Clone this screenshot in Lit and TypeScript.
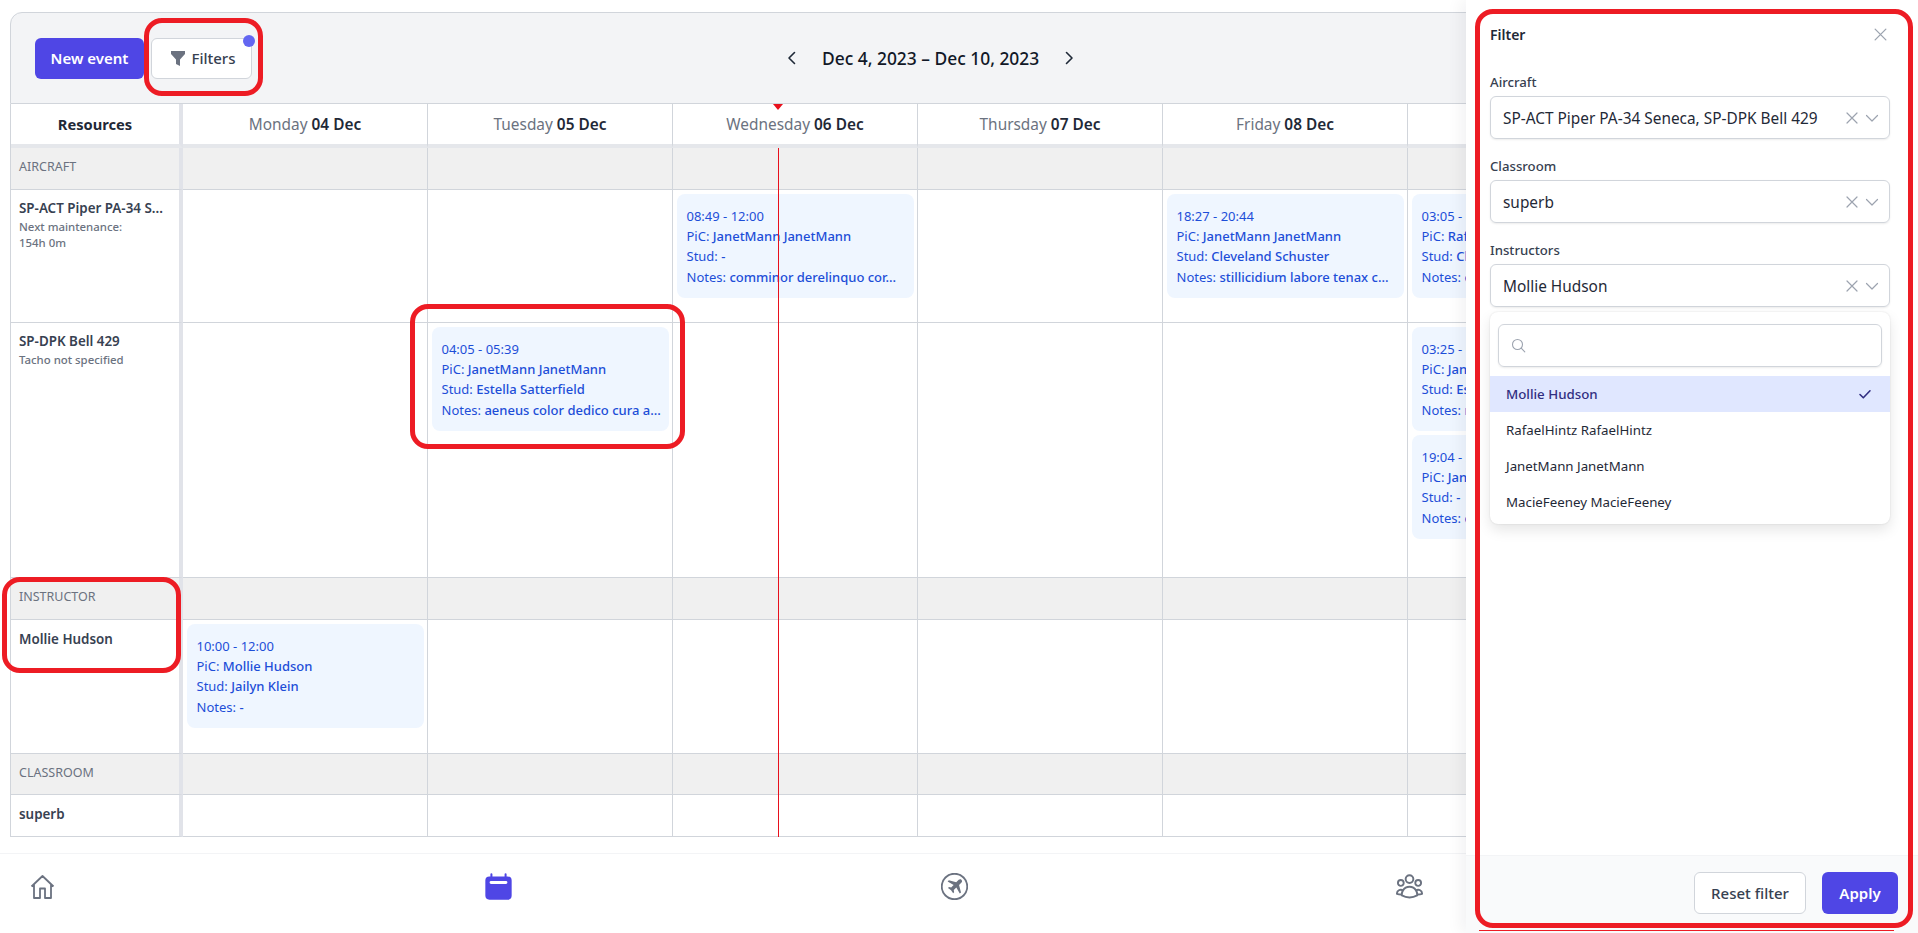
import { LitElement, html, css, svg } from "lit";
import { customElement } from "lit/decorators.js";

type Ev = { time: string; pic: string; stud: string; notes: string };
type Row =
  | { kind: "group"; label: string; h: number }
  | { kind: "res"; name: string; sub?: string[]; h: number; days: Record<number, Ev[]> };

const J = "JanetMann JanetMann";
const ROWS: Row[] = [
  { kind: "group", label: "AIRCRAFT", h: 42 },
  {
    kind: "res", name: "SP-ACT Piper PA-34 S...", sub: ["Next maintenance:", "154h 0m"], h: 133,
    days: {
      2: [{ time: "08:49 - 12:00", pic: J, stud: "-", notes: "comminor derelinquo cor..." }],
      4: [{ time: "18:27 - 20:44", pic: J, stud: "Cleveland Schuster", notes: "stillicidium labore tenax c..." }],
      5: [{ time: "03:05 - 06:12", pic: "RafaelHintz RafaelHintz", stud: "Cleveland Schuster", notes: "cupio vero" }],
    },
  },
  {
    kind: "res", name: "SP-DPK Bell 429", sub: ["Tacho not specified"], h: 255,
    days: {
      1: [{ time: "04:05 - 05:39", pic: J, stud: "Estella Satterfield", notes: "aeneus color dedico cura a..." }],
      5: [
        { time: "03:25 - 04:40", pic: J, stud: "Estella Satterfield", notes: "rerum vero" },
        { time: "19:04 - 20:30", pic: J, stud: "-", notes: "cupio vero" },
      ],
    },
  },
  { kind: "group", label: "INSTRUCTOR", h: 42 },
  {
    kind: "res", name: "Mollie Hudson", h: 134,
    days: { 0: [{ time: "10:00 - 12:00", pic: "Mollie Hudson", stud: "Jailyn Klein", notes: "-" }] },
  },
  { kind: "group", label: "CLASSROOM", h: 41 },
  { kind: "res", name: "superb", h: 42, days: {} },
];
const DAYS: [string, string][] = [
  ["Monday", "04 Dec"], ["Tuesday", "05 Dec"], ["Wednesday", "06 Dec"], ["Thursday", "07 Dec"],
  ["Friday", "08 Dec"], ["Saturday", "09 Dec"], ["Sunday", "10 Dec"],
];
const OPTIONS = ["Mollie Hudson", "RafaelHintz RafaelHintz", "JanetMann JanetMann", "MacieFeeney MacieFeeney"];
const MARKS = [
  { x: 144, y: 18, w: 119, h: 78 },
  { x: 410, y: 304, w: 275, h: 145 },
  { x: 2, y: 577, w: 179, h: 96 },
  { x: 1475, y: 9, w: 438, h: 919 },
];

const xIcon = (s: number) => svg`<svg width=${s} height=${s} viewBox="0 0 14 14" fill="none" stroke="currentColor" stroke-width="1.2" stroke-linecap="round"><path d="M2 2l10 10M12 2L2 12"/></svg>`;
const chev = svg`<svg width="14" height="14" viewBox="0 0 14 14" fill="none" stroke="currentColor" stroke-width="1.2" stroke-linecap="round" stroke-linejoin="round"><path d="M1.5 4.5L7 10l5.5-5.5"/></svg>`;

@customElement("app-root")
export class AppRoot extends LitElement {
  static styles = css`
    :host { display: block; position: relative; width: 1918px; height: 933px; overflow: hidden; background: #fff;
      font-family: "Noto Sans", "Open Sans", sans-serif; color: #374151; font-size: 14px; }
    .page { display: flex; flex-direction: column; height: 933px; padding-top: 12px; box-sizing: border-box; }
    .card { margin-left: 10px; width: 1888px; box-sizing: border-box; border-radius: 12px 12px 0 0; position: relative; height: 825px; }
    .bar { height: 92px; box-sizing: border-box; background: #f3f4f6; border: 1px solid #d1d5db;
      border-radius: 12px 12px 0 0; display: flex; align-items: center; padding: 0 0 0 24px; }
    .btn { height: 41px; box-sizing: border-box; border-radius: 6px; font-size: 15px; font-weight: 600; display: flex; align-items: center; justify-content: center; }
    .primary { background: #4f46e5; color: #fff; }
    .new { width: 109px; }
    .filters { position: relative; width: 101px; margin-left: 7px; padding-left: 10px; background: #fff; border: 1px solid #d1d5db; font-weight: 500; color: #374151; gap: 6px; }
    .dot { position: absolute; top: -4px; right: -4px; width: 12px; height: 12px; border-radius: 50%; background: #6366f1; }
    .range { margin-left: 535px; display: flex; align-items: center; gap: 25px; font-size: 17.4px; font-weight: 500; color: #111827; }
    .range svg { display: block; }
    .grid { display: grid; grid-template-columns: 172px repeat(7, 245px); border-left: 1px solid #d1d5db; box-sizing: border-box; position: relative; }
    .cell { box-sizing: border-box; border-right: 1px solid #d1d5db; border-bottom: 1px solid #d1d5db; min-width: 0; }
    .res { border-right: 4px solid #e1e3e9; }
    .hd { height: 44px; border-bottom: 4px solid #e5e7eb; display: flex; align-items: center; justify-content: center; color: #6b7280; font-size: 15.4px; gap: 4px; }
    .hd b { color: #1f2937; font-weight: 600; }
    .hd.res b { font-weight: 700; color: #1f2937; font-size: 14.7px; }
    .grp { background: #f0f0f0; }
    .grp.res { color: #6b7280; font-size: 12.5px; padding: 9px 0 0 8px; line-height: 20px; }
    .nm { padding: 8px 6px 0 8px; }
    .nm.solo { padding-top: 9px; }
    .nm .t { font-size: 13.4px; font-weight: 600; color: #374151; line-height: 20px; white-space: nowrap; }
    .nm .s { font-size: 11.4px; font-weight: 500; color: #6b7280; line-height: 16px; white-space: nowrap; }
    .nm .t + .s { margin-top: 1px; }
    .day { padding: 4px 3px 0 4px; display: flex; flex-direction: column; gap: 4px; }
    .ev { height: 104px; box-sizing: border-box; padding: 12px 10px 0 9.5px; border-radius: 8px; background: #eff6ff; color: #1d4ed8; font-size: 13px; line-height: 20.2px; }
    .ev div { white-space: nowrap; }
    .ev b { font-weight: 500; }
    .now { position: absolute; left: 768px; top: 136px; height: 689px; width: 1px; background: #e8101c; }
    .tri { position: absolute; left: 763px; top: 92px; width: 0; height: 0; border: 5px solid transparent; border-top: 6px solid #e8101c; border-bottom: 0; }
    .nav { margin-top: 16px; border-top: 1px solid #f3f4f6; height: 80px; box-sizing: border-box; display: flex; justify-content: space-between; padding: 19px 39px 0 29px; align-items: flex-start; color: #6b7280; }
    .nav svg { display: block; width: 27px; height: 27px; }
    .nav .on { color: #4f46e5; }
    .panel { position: absolute; left: 1466px; top: 0; width: 452px; height: 933px; background: #fff; box-shadow: -6px 0 14px rgba(17,24,39,.05);
      display: flex; flex-direction: column; }
    .ptop { height: 856px; box-sizing: border-box; padding: 24px 28px 0 24px; border-bottom: 1px solid #f3f4f6; }
    .phead { display: flex; justify-content: space-between; align-items: center; height: 20px; margin-bottom: 28px; }
    .phead span { font-size: 14px; font-weight: 600; color: #1f2937; }
    .phead i { display: flex; color: #9ca3af; margin-right: 2px; }
    .lab { font-size: 13.2px; font-weight: 500; color: #374151; line-height: 20px; height: 20px; margin: 0 0 4px; }
    .sel { height: 43px; box-sizing: border-box; border: 1px solid #d1d5db; border-radius: 6px; box-shadow: 0 1px 2px rgba(0,0,0,.08); display: flex; align-items: center; padding: 1px 10px 0 12px; font-size: 15.4px; color: #1f2937; margin-bottom: 17px; }
    .sel span { flex: 1; white-space: nowrap; }
    .sel i { display: flex; color: #9ca3af; }
    .sel i + i { margin-left: 6px; }
    .drop { margin-top: -12px; border-radius: 8px; background: #fff; box-shadow: 0 0 2px rgba(0,0,0,.12), 0 6px 14px rgba(0,0,0,.1); height: 212px; box-sizing: border-box; padding-top: 12px; overflow: hidden; }
    .search { height: 43px; margin: 0 8px 9px; box-sizing: border-box; border: 1px solid #d1d5db; border-radius: 6px; box-shadow: 0 1px 2px rgba(0,0,0,.08); display: flex; align-items: center; padding-left: 12px; color: #9ca3af; }
    .opt { height: 36px; display: flex; align-items: center; justify-content: space-between; padding: 0 18px 0 16px; font-size: 13.3px; color: #1f2937; }
    .opt.sel-o { background: #e0e7ff; color: #312e81; font-weight: 500; }
    .pfoot { flex: 1; background: #f9fafb; display: flex; justify-content: flex-end; gap: 16px; padding: 16px 20px 0 0; box-sizing: border-box; align-items: flex-start; }
    .reset { width: 112px; height: 42px; background: #fff; border: 1px solid #d1d5db; color: #374151; font-weight: 500; }
    .apply { width: 76px; height: 42px; }
    .mark { position: absolute; box-sizing: border-box; border: 5px solid #ed1c24; border-radius: 18px; pointer-events: none; }
    .underline { position: absolute; left: 1479px; top: 930px; width: 415px; height: 1px; background: #ed1c24; }
  `;

  private event(e: Ev) {
    return html`<div class="ev">
      <div>${e.time}</div>
      <div>PiC: <b>${e.pic}</b></div>
      <div>Stud: <b>${e.stud}</b></div>
      <div>Notes: <b>${e.notes}</b></div>
    </div>`;
  }

  private row(r: Row) {
    const st = `height:${r.h}px`;
    if (r.kind === "group") {
      return html`<div class="cell grp res" style=${st}>${r.label}</div>
        ${DAYS.map(() => html`<div class="cell grp" style=${st}></div>`)}`;
    }
    return html`<div class="cell res nm ${r.sub ? "" : "solo"}" style=${st}>
        <div class="t">${r.name}</div>
        ${(r.sub ?? []).map((s) => html`<div class="s">${s}</div>`)}
      </div>
      ${DAYS.map((_, i) => html`<div class="cell day" style=${st}>${(r.days[i] ?? []).map((e) => this.event(e))}</div>`)}`;
  }

  private select(label: string, value: string) {
    return html`<div class="lab">${label}</div>
      <div class="sel"><span>${value}</span><i>${xIcon(14)}</i><i>${chev}</i></div>`;
  }

  render() {
    return html`
      <div class="page">
        <div class="card">
          <div class="bar">
            <div class="btn primary new">New event</div>
            <div class="btn filters">
              <svg width="14" height="15" viewBox="0 0 14 15" fill="#6b7280"><path d="M0 0h14v3L9 8.5V15L5 13V8.5L0 3z"/></svg>
              Filters<span class="dot"></span>
            </div>
            <div class="range">
              <svg width="10" height="14" viewBox="0 0 10 14" fill="none" stroke="#1f2937" stroke-width="1.6" stroke-linecap="round" stroke-linejoin="round"><path d="M7.5 1.5L2 7l5.5 5.5"/></svg>
              <span>Dec 4, 2023 – Dec 10, 2023</span>
              <svg width="10" height="14" viewBox="0 0 10 14" fill="none" stroke="#1f2937" stroke-width="1.6" stroke-linecap="round" stroke-linejoin="round"><path d="M2.5 1.5L8 7l-5.5 5.5"/></svg>
            </div>
          </div>
          <div class="grid">
            <div class="cell hd res"><b>Resources</b></div>
            ${DAYS.map(([d, n]) => html`<div class="cell hd">${d} <b>${n}</b></div>`)}
            ${ROWS.map((r) => this.row(r))}
          </div>
          <div class="now"></div>
          <div class="tri"></div>
        </div>
        <div class="nav">
          <svg viewBox="0 0 27 27" fill="none" stroke="currentColor" stroke-width="1.8" stroke-linejoin="round"><path d="M2.5 13.5L13.5 3l11 10.5M5 11.5V25h6v-9.5h5V25h6V11.5"/></svg>
          <svg class="on" viewBox="2 2 20 20" fill="currentColor"><path fill-rule="evenodd" d="M6.75 2.25A.75.75 0 0 1 7.5 3v1.5h9V3A.75.75 0 0 1 18 3v1.5h.75a3 3 0 0 1 3 3v11.25a3 3 0 0 1-3 3H5.25a3 3 0 0 1-3-3V7.5a3 3 0 0 1 3-3H6V3a.75.75 0 0 1 .75-.75zM6.5 8a1 1 0 0 0 0 2.2h11a1 1 0 0 0 0-2.2z"/></svg>
          <svg viewBox="1 1 22 22" fill="none" stroke="currentColor" stroke-width="1.5" stroke-linecap="round" stroke-linejoin="round"><circle cx="12" cy="12" r="10.4"/><path fill="currentColor" stroke="none" d="M17.6 6.4c-.6-.6-1.6-.5-2.2.1l-2 2-6-1.6-1 1 4.9 2.8-2 2.1-1.8-.3-.8.8 2.5 1.7 1.7 2.5.8-.8-.3-1.8 2.1-2 2.8 4.9 1-1-1.6-6 2-2c.6-.6.7-1.6-.1-2.4z"/></svg>
          <svg viewBox="1.5 2 21 21" fill="none" stroke="currentColor" stroke-width="1.5" stroke-linecap="round" stroke-linejoin="round"><path d="M18 18.72a9.1 9.1 0 0 0 3.74-.48 3 3 0 0 0-4.68-2.72M18 18.72v.03c0 .22-.01.45-.04.67A11.9 11.9 0 0 1 12 21c-2.17 0-4.2-.58-5.96-1.58a6 6 0 0 1-.04-.7M18 18.72a5.97 5.97 0 0 0-.94-3.2M6 18.72a9.1 9.1 0 0 1-3.74-.48 3 3 0 0 1 4.68-2.72M6 18.72a5.97 5.97 0 0 1 .94-3.2M17.06 15.52A6 6 0 0 0 12 12.75a6 6 0 0 0-5.06 2.77M15 6.75a3 3 0 1 1-6 0 3 3 0 0 1 6 0zM21 9.75a2.25 2.25 0 1 1-4.5 0 2.25 2.25 0 0 1 4.5 0zM7.5 9.75a2.25 2.25 0 1 1-4.5 0 2.25 2.25 0 0 1 4.5 0z"/></svg>
          <svg viewBox="0 0 24 24" fill="none" stroke="currentColor" stroke-width="1.5"><circle cx="12" cy="8" r="4"/><path d="M4 21a8 8 0 0 1 16 0"/></svg>
        </div>
      </div>
      <div class="panel">
        <div class="ptop">
          <div class="phead"><span>Filter</span><i>${xIcon(15)}</i></div>
          ${this.select("Aircraft", "SP-ACT Piper PA-34 Seneca, SP-DPK Bell 429")}
          ${this.select("Classroom", "superb")}
          ${this.select("Instructors", "Mollie Hudson")}
          <div class="drop">
            <div class="search">
              <svg width="15" height="15" viewBox="0 0 15 15" fill="none" stroke="currentColor" stroke-width="1.1" stroke-linecap="round"><circle cx="6.5" cy="6.5" r="5"/><path d="M10.2 10.2L13.8 13.8"/></svg>
            </div>
            ${OPTIONS.map((o, i) => html`<div class="opt ${i === 0 ? "sel-o" : ""}">${o}${i === 0
              ? html`<svg width="14" height="14" viewBox="0 0 14 14" fill="none" stroke="currentColor" stroke-width="1.6" stroke-linecap="round" stroke-linejoin="round"><path d="M2 7.5l3.3 3.3L12 3.8"/></svg>` : ""}</div>`)}
          </div>
        </div>
        <div class="pfoot">
          <div class="btn reset">Reset filter</div>
          <div class="btn primary apply">Apply</div>
        </div>
      </div>
      ${MARKS.map((m) => html`<div class="mark" style="left:${m.x}px;top:${m.y}px;width:${m.w}px;height:${m.h}px"></div>`)}
      <div class="underline"></div>
    `;
  }
}
